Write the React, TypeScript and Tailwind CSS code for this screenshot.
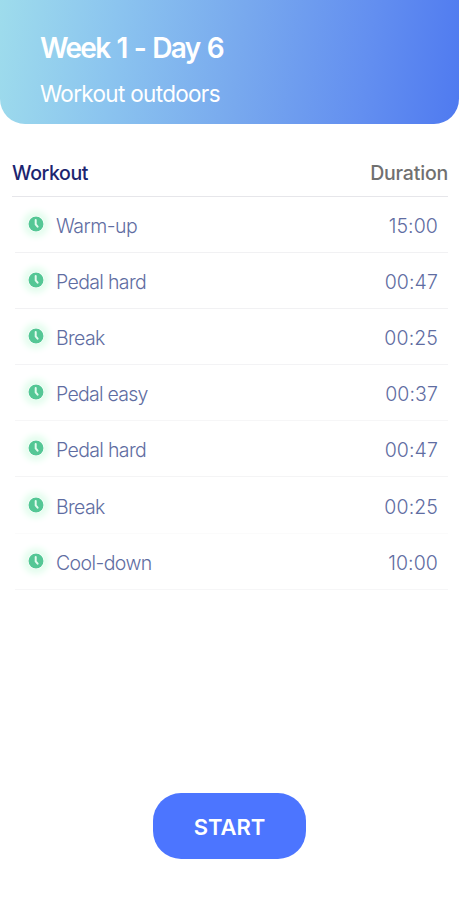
import React from 'react';

type Step = { name: string; duration: string; line: string; tracking: string };

const steps: Step[] = [
  { name: 'Warm-up', duration: '15:00', line: 'border-[#f1f1f3]', tracking: 'tracking-[-0.5px]' },
  { name: 'Pedal hard', duration: '00:47', line: 'border-[#f1f1f3]', tracking: 'tracking-[-0.65px]' },
  { name: 'Break', duration: '00:25', line: 'border-[#f3f3f5]', tracking: 'tracking-[-0.65px]' },
  { name: 'Pedal easy', duration: '00:37', line: 'border-[#f6f6f7]', tracking: 'tracking-[-0.75px]' },
  { name: 'Pedal hard', duration: '00:47', line: 'border-[#f4f4f5]', tracking: 'tracking-[-0.65px]' },
  { name: 'Break', duration: '00:25', line: 'border-[#fbfbfb]', tracking: 'tracking-[-0.65px]' },
  { name: 'Cool-down', duration: '10:00', line: 'border-[#f6f6f7]', tracking: 'tracking-[-0.6px]' },
];

function ClockIcon() {
  return (
    <svg viewBox="0 0 16 16" className="mb-px h-4 w-4 rounded-full shadow-[0_0_6px_5px_#e4fdee]">
      <circle cx="8" cy="8" r="7.5" fill="#54c795" />
      <path d="M7.7 4v4.4l1.9 2.3" fill="none" stroke="#e3fbee" strokeWidth="2" strokeLinecap="round" strokeLinejoin="round" />
    </svg>
  );
}

function StepRow({ step }: { step: Step }) {
  return (
    <li className={`flex h-[56.1px] items-center justify-between border-b pl-[13px] pr-[11px] ${step.line}`}>
      <div className="flex items-center gap-3">
        <ClockIcon />
        <span className={`pt-[3px] text-[19.5px] leading-6 ${step.tracking}`}>{step.name}</span>
      </div>
      <span className="-mr-px pt-[3px] text-[19.5px] leading-6 tracking-[0.1px]">{step.duration}</span>
    </li>
  );
}

export default function App() {
  return (
    <main className="flex h-[900px] w-[459px] flex-col overflow-hidden bg-white font-['Inter',sans-serif]">
      <header className="h-[124px] shrink-0 rounded-b-[25px] bg-[linear-gradient(97deg,#9edcec_0%,#8bc4ef_25%,#78a9ee_52%,#638ff0_79%,#4f7af0_100%)] pl-10 pt-[31px] text-white">
        <h1 className="text-[28px] font-semibold leading-[34px] tracking-[-1.7px] [word-spacing:1.8px]">Week 1 - Day 6</h1>
        <p className="mt-[14px] text-[22.5px] leading-[30px] tracking-[-0.68px]">Workout outdoors</p>
      </header>
      <section className="pl-3 pr-[11px]">
        <div className="flex h-[73px] items-end justify-between border-b border-[#e6e6ea] pb-[11px] text-[19.5px] font-medium leading-6">
          <h2 className="tracking-[-0.4px] text-[#1c2570]">Workout</h2>
          <h2 className="tracking-[-0.2px] text-[#707070]">Duration</h2>
        </div>
        <ul className="pl-[3px] font-light text-[#5f6da2]">
          {steps.map((step, index) => <StepRow key={index} step={step} />)}
        </ul>
      </section>
      <button className="mb-[41px] mt-auto h-[66px] w-[153px] shrink-0 self-center rounded-[28px] bg-[#4c75ff] pt-[3px] text-[22px] font-semibold tracking-[-0.1px] text-white">START</button>
    </main>
  );
}
